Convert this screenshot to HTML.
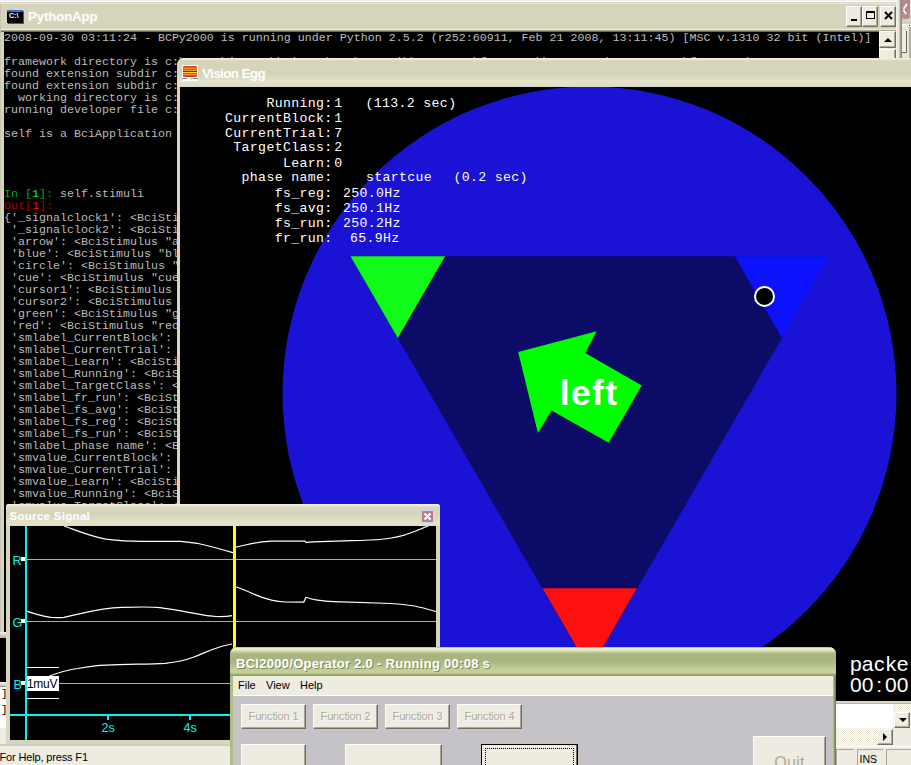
<!DOCTYPE html>
<html><head><meta charset="utf-8">
<style>
*{margin:0;padding:0;box-sizing:border-box}
html,body{width:911px;height:765px;overflow:hidden;background:#ece9d8;position:relative;font-family:"Liberation Sans",sans-serif}
.a{position:absolute}
.vt{font-family:"Liberation Mono",monospace;font-size:13.2px;letter-spacing:0.35px;line-height:14px;color:#fff;white-space:pre}
.sl{font-size:12.6px;color:#00f4f4;line-height:14px}
.om{font-size:11px;color:#000;line-height:14px}
.btn{width:65px;height:25px;background:#eeebe0;border:1px solid #fff;border-right-color:#716f64;border-bottom-color:#716f64;box-shadow:inset -1px -1px 0 #aca899;font-size:11px;letter-spacing:-0.15px;color:#aca899;text-align:center;line-height:22px;text-shadow:1px 1px 0 #fff}
.btn2{height:40px;background:#eeebe0;border:1px solid #fff;border-right-color:#716f64;border-bottom:none;box-shadow:inset -1px 0 0 #aca899}
.tb{width:16px;height:21px;background:#eeebe0;border:1px solid #fff;border-right-color:#716f64;border-bottom-color:#716f64;box-shadow:inset -1px -1px 0 #aca899}
.sb{background:#eeebe0;border:1px solid #fff;border-right-color:#716f64;border-bottom-color:#716f64;box-shadow:inset -1px -1px 0 #aca899}
.hatch{background:conic-gradient(#fff 25%,#e9e6d8 0 50%,#fff 0 75%,#e9e6d8 0) 0 0/2px 2px}
.sp{height:16px;border-top:1px solid #aca899;border-left:1px solid #aca899}
.pk{font-size:21px;line-height:20px;color:#fff;white-space:nowrap}
.pk i{font-style:normal;display:inline-block;width:11.7px;text-align:center}
.con{font-family:"Liberation Mono",monospace;font-size:11.67px;line-height:12px;color:#bcbcbc;white-space:pre}
</style></head><body>
<!-- top strip -->
<div class="a" style="left:0;top:0;width:911px;height:4px;background:linear-gradient(#f5ede5 0 1px,#fff 1px 2px,#d8d5d0 2px 3px,#ece9dc 3px 4px)"></div>
<!-- PythonApp window -->
<div class="a" style="left:0;top:4px;width:902px;height:742px;background:#d6d5bb;border-left:1px solid #c8c4b0"></div>
<div class="a" style="left:1px;top:29px;width:895px;height:3px;background:linear-gradient(#efede0 0 1px,#a8a496 1px 2px,#6e6a5e 2px 3px)"></div>
<div class="a" style="left:4px;top:32px;width:875px;height:650px;background:#000"></div>
<div class="a" style="left:28px;top:9px;font-size:13.2px;font-weight:bold;color:#fff;letter-spacing:-0.1px">PythonApp</div>
<div class="a con" style="left:4px;top:31px;width:875px;height:651px;overflow:hidden;padding-top:1px">2008-09-30 03:11:24 - BCPy2000 is running under Python 2.5.2 (r252:60911, Feb 21 2008, 13:11:45) [MSC v.1310 32 bit (Intel)]

framework directory is c:\users\jeremy\bci2000\src\contrib\BCPy2000\framework\BCPy2000\2008-09-30\framework
found extension subdir c:\bcpy2000\framework\extensions
found extension subdir c:\bcpy2000\framework\extensions
  working directory is c:\bcpy2000\demo
running developer file c:\bcpy2000\demo\TriangleApp.py

self is a BciApplication




<span style="color:#00a800">In [</span><span style="color:#00ff00">1</span><span style="color:#00a800">]:</span> self.stimuli
<span style="color:#a80000">Out[</span><span style="color:#ff0000">1</span><span style="color:#a80000">]:</span>
{'_signalclock1': &lt;BciStimulus
 '_signalclock2': &lt;BciStimulus
 'arrow': &lt;BciStimulus "arrow"
 'blue': &lt;BciStimulus "blue"
 'circle': &lt;BciStimulus "circle"
 'cue': &lt;BciStimulus "cue"
 'cursor1': &lt;BciStimulus "cursor1"
 'cursor2': &lt;BciStimulus "cursor2"
 'green': &lt;BciStimulus "green"
 'red': &lt;BciStimulus "red"
 'smlabel_CurrentBlock': &lt;BciStimulus
 'smlabel_CurrentTrial': &lt;BciStimulus
 'smlabel_Learn': &lt;BciStimulus
 'smlabel_Running': &lt;BciStimulus
 'smlabel_TargetClass': &lt;BciStimulus
 'smlabel_fr_run': &lt;BciStimulus
 'smlabel_fs_avg': &lt;BciStimulus
 'smlabel_fs_reg': &lt;BciStimulus
 'smlabel_fs_run': &lt;BciStimulus
 'smlabel_phase name': &lt;BciStimulus
 'smvalue_CurrentBlock': &lt;BciStimulus
 'smvalue_CurrentTrial': &lt;BciStimulus
 'smvalue_Learn': &lt;BciStimulus
 'smvalue_Running': &lt;BciStimulus
 'smvalue_TargetClass': &lt;BciStimulus
</div>


<!-- PythonApp extras -->
<div class="a" style="left:7px;top:10px;width:16px;height:13px;background:#000;border-top:2px solid #2f6fe0;box-shadow:1px 1px 0 #4a5a7a"></div>
<div class="a" style="left:9px;top:12px;font-family:'Liberation Sans',sans-serif;font-size:7px;font-weight:bold;color:#fff;line-height:8px">C:\</div>
<div class="a tb" style="left:846px;top:6px"><div class="a" style="left:4px;top:12px;width:6px;height:2px;background:#000"></div></div>
<div class="a tb" style="left:862px;top:6px"><div class="a" style="left:3px;top:4px;width:9px;height:8px;border:1px solid #000;border-top-width:2px"></div></div>
<div class="a tb" style="left:880px;top:6px"><svg class="a" style="left:3px;top:4px" width="10" height="10" viewBox="0 0 10 10"><path d="M1 1L8 8M8 1L1 8" stroke="#000" stroke-width="2"/></svg></div>
<!-- console scrollbar -->
<div class="a" style="left:879px;top:31px;width:17px;height:27px;background:#eeebe0"></div>
<div class="a sb" style="left:879px;top:31px;width:17px;height:17px"><div class="a" style="left:4px;top:6px;width:0;height:0;border-left:4px solid transparent;border-right:4px solid transparent;border-bottom:4px solid #000"></div></div>
<div class="a sb" style="left:879px;top:48.5px;width:17px;height:12px"></div>
<div class="a" style="left:896px;top:0;width:6px;height:58px;background:linear-gradient(90deg,#f6f4ec 0,#e4e2d6 3px,#b4b2a4 4px,#8c8a7c 5px,#8c8a7c 6px)"></div>
<!-- other window strip at right -->
<div class="a" style="left:902px;top:0;width:9px;height:58px;background:#e6e5d6"></div>
<div class="a" style="left:902px;top:0;width:7.5px;height:19px;background:#b9878f;border-radius:0 0 2px 2px"></div>
<svg class="a" style="left:902px;top:0" width="9" height="19"><path d="M5 4L1.5 9M1.5 10L4 14" stroke="#fff" stroke-width="1.8"/></svg>
<div class="a" style="left:902px;top:19px;width:9px;height:5px;background:#cdd5bd"></div>
<div class="a" style="left:902px;top:24px;width:9px;height:3px;background:#f6f5ee"></div>
<div class="a" style="left:909px;top:25px;width:1px;height:1px;background:#333"></div>
<div class="a" style="left:902px;top:31px;width:4.5px;height:22px;background:#f0eee4;border-right:1px solid #6e6c60;border-bottom:1px solid #6e6c60"></div>
<div class="a" style="left:909px;top:27px;width:2px;height:31px;background:#b0ae9e"></div>
<!-- bottom area behind -->
<div class="a" style="left:0;top:632px;width:8px;height:6px;background:linear-gradient(#f4f2e8,#d8d5c8 3px,#b0ad9f 6px)"></div>
<div class="a" style="left:0;top:638px;width:8px;height:44px;background:#000"></div>
<div class="a" style="left:0;top:682px;width:8px;height:5px;background:linear-gradient(#f4f2ec,#d8d6cc 3px,#8e8c80 5px)"></div>
<div class="a" style="left:0;top:687px;width:6px;height:41px;background:#fff"></div>
<div class="a" style="left:1px;top:686px;font-family:'Liberation Mono',monospace;font-size:11px;line-height:16px;color:#000;white-space:pre">]
]</div>
<div class="a" style="left:0;top:731px;width:5px;height:12px;background:#fff;border-right:1px solid #aca899"></div>
<div class="a" style="left:0;top:728px;width:6px;height:16px;background:#eeebe0"></div>
<div class="a" style="left:0;top:744px;width:230px;height:2px;background:#cfccbf"></div>
<div class="a" style="left:0;top:746px;width:911px;height:19px;background:#eeebe0"></div>
<div class="a" style="left:-0.5px;top:749.5px;font-size:11px;line-height:14px;color:#000;letter-spacing:-0.15px">For Help, press F1</div>
<!-- right bottom -->
<div class="a" style="left:836px;top:701px;width:75px;height:3px;background:linear-gradient(#e6ead2 0 1px,#b4baa2 1px)"></div>
<div class="a hatch" style="left:836px;top:704px;width:75px;height:42px"></div>
<div class="a" style="left:836px;top:704px;width:57px;height:23.5px;background:#fff"></div>
<div class="a" style="left:893px;top:727.5px;width:18px;height:18px;background:#eeebe0"></div>
<div class="a sb" style="left:894px;top:711.5px;width:16px;height:16px"><div class="a" style="left:4px;top:5px;width:0;height:0;border-left:4px solid transparent;border-right:4px solid transparent;border-top:4px solid #000"></div></div>
<div class="a sb" style="left:876.5px;top:728.5px;width:16px;height:16px"><div class="a" style="left:5px;top:3.5px;width:0;height:0;border-top:4px solid transparent;border-bottom:4px solid transparent;border-left:4px solid #000"></div></div>
<div class="a" style="left:836px;top:745.5px;width:75px;height:1.5px;background:#fff"></div>
<div class="a sp" style="left:836px;top:749px;width:18px"></div>
<div class="a sp" style="left:857px;top:749px;width:26px"><span class="a" style="left:1.5px;top:1.5px;font-size:10.5px;line-height:14px;color:#000">INS</span></div>
<div class="a sp" style="left:886px;top:749px;width:30px"></div>

<!-- Vision Egg window -->
<div class="a" style="left:177px;top:58px;width:740px;height:645px;background:#d9d6bd;border-top-left-radius:7px"></div>
<div class="a" style="left:177px;top:58px;width:740px;height:29px;border-top-left-radius:7px;background:linear-gradient(#f3f0dc 0 1px,#e6e4cc 1px 2px,#d6d5bb 3px 12px,#d3d4b8 14px 17px,#dadcc2 19px 21px,#e6e2c7 22px 25px,#dedfc7 26px 28px,#d2d6ba 29px)"></div>
<div class="a" style="left:180px;top:87px;width:731px;height:614px;background:#000;overflow:hidden">
<svg width="731" height="614" viewBox="180 87 731 614" style="position:absolute;left:0;top:0">
<circle cx="589.5" cy="393.5" r="307" fill="#1a12d4"/>
<polygon points="350.5,256.2 829.1,256.2 589.8,670.7" fill="#0d0b68"/>
<polygon points="350.5,256.2 445.1,256.2 397.8,338.1" fill="#10fc18"/>
<polygon points="734.8,256.2 829.1,256.2 782,337.8" fill="#0c12fc"/>
<polygon points="542.5,588.2 637,588.2 589.8,670" fill="#fd1010"/>
<circle cx="764.5" cy="296.4" r="9.5" fill="#000" stroke="#fff" stroke-width="2"/>
<polygon points="518.2,352.1 596.7,331.2 585.2,352.9 641.7,385.5 608.7,442.7 551.6,410.6 537.9,433.1" fill="#00ff00"/>
</svg>
</div>
<!-- VE text -->
<div class="a vt" style="right:578.5px;top:96.8px">Running:</div>
<div class="a vt" style="left:334.2px;top:96.8px">1</div>
<div class="a vt" style="left:365.5px;top:96.8px">(113.2 sec)</div>
<div class="a vt" style="right:578.5px;top:111.6px">CurrentBlock:</div>
<div class="a vt" style="left:334.2px;top:111.6px">1</div>
<div class="a vt" style="right:578.5px;top:126.5px">CurrentTrial:</div>
<div class="a vt" style="left:334.2px;top:126.5px">7</div>
<div class="a vt" style="right:578.5px;top:141.3px">TargetClass:</div>
<div class="a vt" style="left:334.2px;top:141.3px">2</div>
<div class="a vt" style="right:578.5px;top:156.5px">Learn:</div>
<div class="a vt" style="left:334.2px;top:156.5px">0</div>
<div class="a vt" style="right:578.5px;top:171.4px">phase name:</div>
<div class="a vt" style="left:366px;top:171.4px">startcue</div>
<div class="a vt" style="left:453.5px;top:171.4px">(0.2 sec)</div>
<div class="a vt" style="right:578.5px;top:186.5px">fs_reg:</div>
<div class="a vt" style="left:343.0px;top:186.5px">250.0Hz</div>
<div class="a vt" style="right:578.5px;top:201.5px">fs_avg:</div>
<div class="a vt" style="left:343.0px;top:201.5px">250.1Hz</div>
<div class="a vt" style="right:578.5px;top:216.5px">fs_run:</div>
<div class="a vt" style="left:343.0px;top:216.5px">250.2Hz</div>
<div class="a vt" style="right:578.5px;top:231.5px">fr_run:</div>
<div class="a vt" style="left:349.9px;top:231.5px">65.9Hz</div>
<div class="a" style="left:182px;top:65px;width:16px;height:16px;background:#fff"></div>
<div class="a" style="left:183px;top:66px;width:14px;height:11px;border-radius:1px;background:linear-gradient(#c84838 0 1px,#e85828 1px 2px,#ff9818 2px 3px,#d05038 3px 4px,#ffa020 4px 5px,#503030 5px 6px,#ffc070 6px 7px,#d84838 7px 8px,#ff9818 8px 9px,#c84838 9px 11px)"></div>
<div class="a" style="left:182px;top:78px;width:5px;height:1px;background:#8080a8"></div>
<div class="a" style="left:193px;top:78px;width:5px;height:1px;background:#8080a8"></div>
<div class="a" style="left:190px;top:77px;width:3px;height:3px;background:#a0f0c0;border-radius:50%"></div>
<div class="a" style="left:202px;top:66px;font-size:13.6px;font-weight:bold;color:#fff;letter-spacing:-0.7px">Vision Egg</div>
<div class="a" style="left:559.8px;top:373px;font-size:35.5px;font-weight:bold;color:#fff;letter-spacing:1.3px">left</div>
<div class="a pk" style="left:850px;top:654px"><i>p</i><i>a</i><i>c</i><i>k</i><i>e</i></div>
<div class="a pk" style="left:850px;top:674.5px"><i>0</i><i>0</i><i>:</i><i>0</i><i>0</i></div>
<!-- VISION_EGG -->


<!-- Source Signal window -->
<div class="a" style="left:6px;top:504px;width:434px;height:240px;background:#d8d5bb;border-radius:3px 3px 0 0"></div>
<div class="a" style="left:6px;top:504px;width:434px;height:22px;border-radius:3px 3px 0 0;background:linear-gradient(#f3f0db 0,#f3f0db 1px,#dad9bf 3px,#d5d4ba 10px,#dcdcc2 15px,#e5e1c6 19px,#dcddc4 22px)"></div>
<div class="a" style="left:9.5px;top:510px;font-size:11.5px;font-weight:bold;color:#fff;letter-spacing:0.3px">Source Signal</div>
<div class="a" style="left:421px;top:510px;width:13px;height:13px;background:#b67d8b;border:1px solid #c9d3f2;border-radius:2px"></div>
<svg class="a" style="left:421px;top:510px" width="13" height="13" viewBox="0 0 13 13"><path d="M3.5 3.5 L9.5 9.5 M9.5 3.5 L3.5 9.5" stroke="#fff" stroke-width="2.2"/></svg>
<div class="a" style="left:10px;top:526px;width:426px;height:214px;background:#000;overflow:hidden">
<svg width="426" height="214" viewBox="10 526 426 214" style="position:absolute;left:0;top:0">
<g stroke="#00f4f4" fill="none">
<line x1="27" y1="559.5" x2="436" y2="559.5" stroke-width="1" shape-rendering="crispEdges"/>
<line x1="27" y1="621.5" x2="436" y2="621.5" stroke-width="1" shape-rendering="crispEdges"/>
<line x1="27" y1="683.5" x2="436" y2="683.5" stroke-width="1" shape-rendering="crispEdges"/>
<line x1="10" y1="715" x2="436" y2="715" stroke-width="2"/>
<line x1="26" y1="526" x2="26" y2="740" stroke-width="2"/>
<line x1="108" y1="715" x2="108" y2="720" stroke-width="2"/>
<line x1="190" y1="715" x2="190" y2="720" stroke-width="2"/>
<line x1="272" y1="715" x2="272" y2="720" stroke-width="2"/>
<line x1="354" y1="715" x2="354" y2="720" stroke-width="2"/>
</g>
<g fill="#fff">
<rect x="21" y="557" width="4" height="4"/>
<rect x="21" y="619" width="4" height="4"/>
<rect x="21" y="681" width="4" height="4"/>
</g>
<g stroke="#fff" fill="none" stroke-width="1.2">
<path d="M64,526 C78,531 92,537 105.9,539.1 C118,540.5 130,541.3 141,541.3 L180.5,541.3 C188,542 193,542.8 198,543.5 C210,546 222,549.5 233,552.7"/>
<path d="M236,547.2 C245,545 250,543.5 257.7,542.6 C263,541.8 267,541.3 271.5,541.2 L305,541.2 L306,542.3 L313,541.8 C330,541.2 342,540.9 352,540.7 C362,540.4 370,540 377.5,539.7 C384,539 388,538.6 391.4,538 C397,537 401,536 405.2,534.8 C412,532.6 417,530.7 421.3,528.8 C424,527.6 426,526.8 428.2,526"/>
<path d="M27,611.2 C35,614 42,616.5 51,617.4 C56,617.6 60,617.6 64,617.3 C85,613 100,608 121.8,607.4 C135,607 150,606.5 160,607.6 C185,611 205,616 216,616.5 C225,617 230,616 232,615.6"/>
<path d="M236,586.8 C242,589 248,591.5 253,593.8 C259,596.5 265,598.6 271.5,600.2 C276,601.2 280,601.8 285.3,602 L303.8,602.1 L306,597.2 C309,598.5 313,599.6 317.6,600.2 C323,601 328,601.5 333.7,601.7 C355,602.5 375,603 391.4,603.5 C400,604 407,604.8 414.4,606 C422,607.5 429,609.5 436,611.5"/>
<path d="M49,676.2 C60,672 70,669.5 78,668.5 C86,667 93,666 99.7,665.4 C115,664.6 128,664.3 138.4,664.2 C150,664 158,663.8 165,663.4 C178,662 186,660 194,657 C202,654 207,651.5 213,649.2 C220,646.5 225,645 232,644"/>
<line x1="27" y1="667.5" x2="59" y2="667.5" stroke-width="1"/>
<line x1="27" y1="698.5" x2="59" y2="698.5" stroke-width="1"/>
</g>
<rect x="27" y="676" width="32" height="15" fill="#fff"/>
<rect x="233" y="526" width="3" height="214" fill="#ffff00"/>
</svg>
<div class="a" style="left:17px;top:150.5px;font-size:12px;line-height:14px;color:#000;letter-spacing:-0.3px">1muV</div>
<div class="a sl" style="left:2.5px;top:27.5px">R</div>
<div class="a sl" style="left:2.5px;top:89.5px">G</div>
<div class="a sl" style="left:3.5px;top:151.5px">B</div>
<div class="a sl" style="left:91.5px;top:195px">2s</div>
<div class="a sl" style="left:173.5px;top:195px">4s</div>
</div>
<!-- SOURCE_SIGNAL -->


<!-- Operator window -->
<div class="a" style="left:230px;top:647px;width:606px;height:130px;background:#aebc84;border-radius:7px 7px 0 0"></div>
<div class="a" style="left:833px;top:676px;width:3px;height:100px;background:linear-gradient(90deg,#bccb92,#8a9e64 50%,#5a7a44)"></div>
<div class="a" style="left:230px;top:647px;width:606px;height:29px;border-radius:7px 7px 0 0;background:linear-gradient(#8c9c62 0,#eef2d2 1px,#e6ebc4 3px,#c4cd98 5px,#a9b583 7px,#a8b482 13px,#b2c08e 18px,#c3ce96 22px,#c6d097 26px,#9aaa6c 27.5px,#8e9e62 29px)"></div>
<div class="a" style="left:233px;top:676px;width:600px;height:20px;background:#eeebe0"></div>
<div class="a" style="left:233px;top:695px;width:600px;height:1px;background:#fff"></div>
<div class="a" style="left:233px;top:696px;width:600px;height:80px;background:#c6c3c8"></div>
<div class="a" style="left:236px;top:655.5px;font-size:13px;font-weight:bold;color:#fff;letter-spacing:0.28px;text-shadow:1px 1px 0 #7c8a58">BCI2000/Operator 2.0 - Running 00:08 s</div>
<div class="a om" style="left:238px;top:678px">File</div>
<div class="a om" style="left:266px;top:678px">View</div>
<div class="a om" style="left:300px;top:678px">Help</div>
<div class="a btn" style="left:241px;top:704px">Function 1</div>
<div class="a btn" style="left:313px;top:704px">Function 2</div>
<div class="a btn" style="left:385px;top:704px">Function 3</div>
<div class="a btn" style="left:457px;top:704px">Function 4</div>
<div class="a btn2" style="left:241px;top:744px;width:65px"></div>
<div class="a btn2" style="left:345px;top:744px;width:97px"></div>
<div class="a btn2" style="left:481px;top:744px;width:97px;border:1px solid #000;box-shadow:inset -1px -1px 0 #716f64"><div class="a" style="left:3px;top:3px;right:3px;bottom:-20px;border:1px dotted #000"></div></div>
<div class="a btn2" style="left:753px;top:736px;width:73px;height:40px;text-align:center;font-size:16px;color:#aca899;padding-top:17px;letter-spacing:0.3px">Quit</div>

<!-- OPERATOR -->

</body></html>
